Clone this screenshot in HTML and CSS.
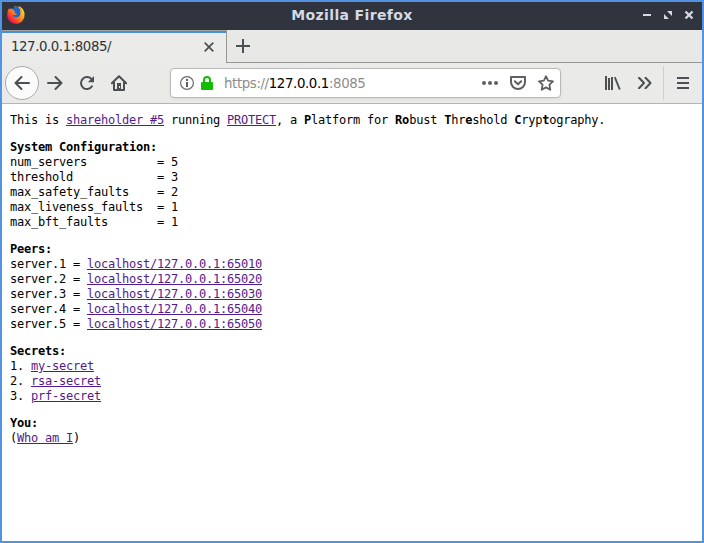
FILE: index.html
```html
<!DOCTYPE html>
<html lang="en">
<head>
<meta charset="utf-8">
<title>Mozilla Firefox</title>
<link rel="stylesheet" href="styles.css">
</head>
<body>
<div class="window">
  <header class="titlebar">
    <svg class="logo" width="20" height="20" viewBox="0 0 20 20">
      <defs>
        <linearGradient id="flame" x1="1" y1="0" x2="0.1" y2="0.9">
          <stop offset="0" stop-color="#fff044"/><stop offset=".35" stop-color="#ffb319"/><stop offset=".62" stop-color="#ff6a20"/><stop offset=".85" stop-color="#f52440"/><stop offset="1" stop-color="#d41670"/>
        </linearGradient>
      </defs>
      <path fill="url(#flame)" d="M1.2 9 2 4.800 3.200 3.200 3.700 4.600 5.300 2.900 5.800 4.100 8 4.500 9 1 12 2.300 14 1.500 17 4.200 18.600 8.300 18.300 12.600 16 16.500 12 18.800 7.500 18.600 3.500 16.300 1.500 12.800z"/>
      <path fill="#1767d2" d="M6.300 4.300C7.200 2.100 9.500 1.200 11.500 1.800c2.300 1 3 3 2.900 5.800.4 2.900-1.600 5-4.300 4.700-1.900-.2-2.900-1-3.400-2.100l2.900-.1 1.600-1.200-2.800-.9.800-1.400z"/>
      <path fill="#ff9a16" d="M11.600 1.200c3.500.5 5 3.600 4.400 7-.4-1-.8-1.600-1.500-2C14.300 4 13.200 2.500 11.600 1.200z"/>
    </svg>
    <h1 class="title">Mozilla Firefox</h1>
    <svg class="controls" width="52" height="10" viewBox="0 0 52 10">
      <path fill="#d3dae3" d="M1 4h8v2H1z"/>
      <path fill="#d3dae3" d="M25 1h5v5zM22 4v5h5z"/>
      <path stroke="#d3dae3" stroke-width="2.300" d="M43.500 1.500l7 7m0-7l-7 7"/>
    </svg>
  </header>
  <div class="tabstrip">
    <div class="tab">
      <span class="tab-label">127.0.0.1:8085/</span>
      <svg class="tab-close" width="10" height="10" viewBox="0 0 10 10"><path d="M.7.700l8.600 8.600m0-8.600l-8.600 8.600" stroke="#4c5053" stroke-width="1.700"/></svg>
    </div>
    <div class="tab-rest">
      <svg width="14" height="14" viewBox="0 0 14 14"><path d="M7 0v14M0 7h14" stroke="#4c5053" stroke-width="2"/></svg>
    </div>
  </div>
  <nav class="toolbar">
    <span class="back"><svg width="16" height="16" viewBox="0 0 16 16"><path class="line" d="M15 8H1.500M7.500 2l-6 6 6 6"/></svg></span>
    <svg class="forward" width="16" height="16" viewBox="0 0 16 16"><path class="line" d="M1 8h13.500M8.500 2l6 6-6 6"/></svg>
    <svg class="reload" width="16" height="16" viewBox="0 0 16 16"><path class="line" d="M13 11.300A6 6 0 1 1 12.800 4.500"/><path fill="#4c5053" d="M15 1v6.200H8.800z"/></svg>
    <svg class="home" width="16" height="16" viewBox="0 0 16 16"><path class="line" d="M.8 8.300L8 1.200l7.200 7.100M3 7.500v7.400h10V7.500"/><path fill="#4c5053" d="M6 8h4v7H6z"/><path fill="#eaeae8" d="M8 11h1v2H8z"/></svg>
    <div class="urlbar">
      <svg width="14" height="14" viewBox="0 0 14 14"><circle cx="7" cy="7" r="6.400" fill="none" stroke="#6b6b6b" stroke-width="1.200"/><path fill="#606060" d="M6 3h2v2H6zM6 6h2v5H6z"/></svg>
      <svg class="lock" width="12" height="14" viewBox="0 0 12 14"><path fill="none" stroke="#12bc00" stroke-width="2" d="M3 7V4a3 3 0 0 1 6 0v3"/><rect y="6" width="12" height="8" rx="1" fill="#12bc00"/></svg>
      <span class="url">https://<span class="host">127.0.0.1</span>:8085</span>
      <svg class="dots" width="16" height="4" viewBox="0 0 16 4" fill="#606060"><circle cx="2" cy="2" r="2"/><circle cx="8" cy="2" r="2"/><circle cx="14" cy="2" r="2"/></svg>
      <svg class="pocket" width="16" height="14" viewBox="0 0 16 14"><path fill="none" stroke="#606060" stroke-width="2" stroke-linejoin="round" d="M1 1h14v5a7 7 0 0 1-14 0z"/><path fill="none" stroke="#606060" stroke-width="2" stroke-linecap="round" stroke-linejoin="round" d="M4.800 5.200L8 8.300l3.200-3.100"/></svg>
      <svg class="star" width="16" height="16" viewBox="0 0 16 16"><path fill="none" stroke="#606060" stroke-width="1.800" stroke-linejoin="round" d="M8 1.200l2.100 4.500 4.900.6-3.600 3.400.9 5.100L8 12.400l-4.300 2.400.9-5.100L1 6.300l4.900-.6z"/></svg>
    </div>
    <svg class="library" width="16" height="14" viewBox="0 0 16 14"><path stroke="#4c5053" stroke-width="2" d="M1 0v14M4 2v12M7 1v13"/><path stroke="#4c5053" stroke-width="1.800" d="M9.800 1.200l5 12.400"/></svg>
    <svg class="more" width="14" height="12" viewBox="0 0 14 12"><path class="line" d="M1 .8L6 6l-5 5.200M7.500.8l5 5.200-5 5.200"/></svg>
    <div class="menu"><svg width="12" height="12" viewBox="0 0 12 12"><path fill="#4c5053" d="M0 0h12v2H0zM0 5h12v2H0zM0 10h12v2H0z"/></svg></div>
  </nav>
  <main class="page">
<pre>This is <a>shareholder #5</a> running <a>PROTECT</a>, a <b>P</b>latform for <b>Ro</b>bust <b>T</b>hr<b>e</b>shold <b>C</b>ryp<b>t</b>ography.</pre>
<pre><b>System Configuration:</b>
num_servers          = 5
threshold            = 3
max_safety_faults    = 2
max_liveness_faults  = 1
max_bft_faults       = 1</pre>
<pre><b>Peers:</b>
server.1 = <a>localhost/127.0.0.1:65010</a>
server.2 = <a>localhost/127.0.0.1:65020</a>
server.3 = <a>localhost/127.0.0.1:65030</a>
server.4 = <a>localhost/127.0.0.1:65040</a>
server.5 = <a>localhost/127.0.0.1:65050</a></pre>
<pre><b>Secrets:</b>
1. <a>my-secret</a>
2. <a>rsa-secret</a>
3. <a>prf-secret</a></pre>
<pre><b>You:</b>
(<a>Who am I</a>)</pre>
  </main>
</div>
</body>
</html>
```
FILE: styles.css
```css
* { box-sizing: border-box; }
body { margin: 0; }
svg { display: block; flex: none; }
.line { fill: none; stroke: #4c5053; stroke-width: 2; stroke-linecap: round; stroke-linejoin: round; }
.window {
  width: 704px;
  height: 543px;
  border: 2px solid #5294e2;
  background: #fff;
  display: flex;
  flex-direction: column;
  font-family: "DejaVu Sans", sans-serif;
}
.titlebar {
  height: 28px;
  flex: none;
  background: #2f343f;
  display: grid;
  grid-template-columns: 60px 1fr 60px;
  align-items: center;
}
.logo { margin: -2px 0 0 4px; }
.title {
  margin: 0;
  text-align: center;
  font-size: 14px;
  letter-spacing: .36px;
  line-height: 20px;
  color: #d3dae3;
  padding-bottom: 2px;
}
.controls { justify-self: end; margin: -3px 8px 0 0; }
.tabstrip { display: flex; height: 33px; flex: none; background: #e8e8e6; }
.tab {
  width: 225px;
  display: flex;
  align-items: center;
  justify-content: space-between;
  padding: 0 12px 0 9px;
  background: #ebebe9;
  border-top: 1px solid #a3a19e;
  border-right: 1px solid #979794;
  position: relative;
}
.tab::before {
  content: "";
  position: absolute;
  inset: 0 0 auto;
  height: 2px;
  background: #4a90d9;
}
.tab-label {
  font-size: 13.33px;
  letter-spacing: -.43px;
  color: #2e3436;
  padding-bottom: 1px;
}
.tab-close { margin-top: -1px; }
.tab-rest { flex: 1; border-bottom: 1px solid #979794; padding: 9px 0 0 9px; }
.toolbar {
  height: 41px;
  flex: none;
  display: flex;
  align-items: center;
  background: #eaeae8;
  border-bottom: 1px solid #b5b5b3;
  padding-left: 3px;
}
.back {
  width: 34px;
  height: 34px;
  border: 1px solid #aaaaa8;
  border-radius: 50%;
  background: #fbfbfb;
  display: grid;
  place-items: center;
}
.forward { margin-left: 8px; }
.reload, .home { margin-left: 16px; }
.urlbar {
  width: 391px;
  height: 30px;
  margin-left: 43px;
  border: 1px solid #b9b9b7;
  border-radius: 4px;
  background: #fff;
  box-shadow: 0 1px 3px #0001;
  display: flex;
  align-items: center;
  padding-left: 9px;
}
.lock { margin-left: 7px; }
.url {
  width: 258px;
  margin-left: 11px;
  font-size: 13.33px;
  letter-spacing: -.38px;
  color: #8c8c8c;
  white-space: nowrap;
}
.host { color: #000; }
.pocket { margin-left: 12px; }
.star { margin-left: 12px; }
.library { margin-left: 44px; }
.more { margin-left: 17px; }
.menu { margin-left: 11px; height: 34px; padding-left: 13px; border-left: 1px solid #d0d0ce; display: flex; align-items: center; }
.page {
  flex: 1;
  padding: 9px 8px 8px;
  display: flex;
  flex-direction: column;
  gap: 12px;
}
pre {
  margin: 0;
  font: 12px/15px "DejaVu Sans Mono", monospace;
  letter-spacing: -0.2245px;
  color: #000;
}
a { color: #551a8b; text-decoration: underline; }
```
